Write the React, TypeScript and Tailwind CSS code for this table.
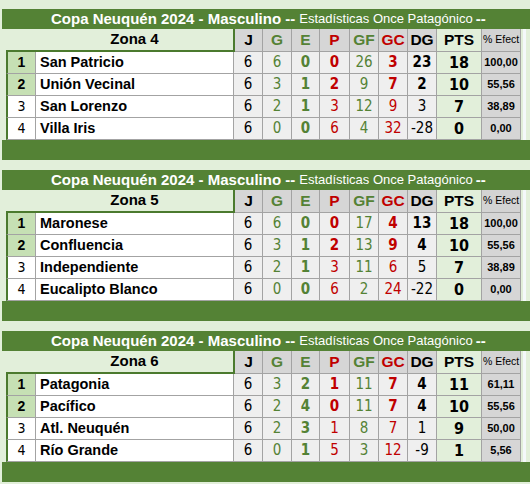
import React from 'react'

type Row = [string, number, number, number, number, number, number, number, number, string]

const zonas: { name: string; rows: Row[] }[] = [
  {
    name: 'Zona 4',
    rows: [
      ['San Patricio', 6, 6, 0, 0, 26, 3, 23, 18, '100,00'],
      ['Unión Vecinal', 6, 3, 1, 2, 9, 7, 2, 10, '55,56'],
      ['San Lorenzo', 6, 2, 1, 3, 12, 9, 3, 7, '38,89'],
      ['Villa Iris', 6, 0, 0, 6, 4, 32, -28, 0, '0,00'],
    ],
  },
  {
    name: 'Zona 5',
    rows: [
      ['Maronese', 6, 6, 0, 0, 17, 4, 13, 18, '100,00'],
      ['Confluencia', 6, 3, 1, 2, 13, 9, 4, 10, '55,56'],
      ['Independiente', 6, 2, 1, 3, 11, 6, 5, 7, '38,89'],
      ['Eucalipto Blanco', 6, 0, 0, 6, 2, 24, -22, 0, '0,00'],
    ],
  },
  {
    name: 'Zona 6',
    rows: [
      ['Patagonia', 6, 3, 2, 1, 11, 7, 4, 11, '61,11'],
      ['Pacífico', 6, 2, 4, 0, 11, 7, 4, 10, '55,56'],
      ['Atl. Neuquén', 6, 2, 3, 1, 8, 7, 1, 9, '50,00'],
      ['Río Grande', 6, 0, 1, 5, 3, 12, -9, 1, '5,56'],
    ],
  },
]

const narrow = "font-['Liberation_Sans_Narrow','Arial_Narrow','DejaVu_Sans_Condensed','Liberation_Sans',sans-serif] font-stretch-condensed"
const cell = 'flex items-center justify-center border-r border-b border-[#a3a3a3] h-full'

function Panel({ name, rows }: { name: string; rows: Row[] }) {
  return (
    <div>
      {/* title band */}
      <div className="ml-[2px] h-[20px] bg-[#548235] text-white flex items-center pl-[49px] whitespace-nowrap">
        <span className="text-[15px] font-bold">Copa Neuquén 2024 - Masculino --</span>
        <span className="text-[13px] ml-[4px]">Estadísticas Once Patagónico</span>
        <span className="text-[15px] font-bold ml-[3px]">--</span>
      </div>

      {/* header row */}
      <div className="flex h-[23px] text-[15.5px] font-bold">
        <div className="ml-[6px] w-[229px] h-full border-r-2 border-b-2 border-[#4b7a2e] bg-[#e2efda] flex items-center justify-center pl-[30px] text-[15px] text-black">
          {name}
        </div>
        <div className={`${cell} w-[28px] bg-[#d6d6d6] text-black`}>J</div>
        <div className={`${cell} w-[29px] bg-[#d6d6d6] text-[#548235]`}>G</div>
        <div className={`${cell} w-[28px] bg-[#d6d6d6] text-[#548235]`}>E</div>
        <div className={`${cell} w-[30px] bg-[#d6d6d6] text-[#c00000]`}>P</div>
        <div className={`${cell} w-[29px] bg-[#d6d6d6] text-[#548235]`}>GF</div>
        <div className={`${cell} w-[29px] bg-[#d6d6d6] text-[#c00000]`}>GC</div>
        <div className={`${cell} w-[29px] bg-[#d6d6d6] text-black`}>DG</div>
        <div className={`${cell} w-[45px] bg-[#e2efda] text-black`}>PTS</div>
        <div className="w-[39px] h-full border-r border-b border-[#a3a3a3] bg-[#d3d3d3] flex items-center pl-[1px] whitespace-nowrap text-[10.5px] font-normal text-black">
          % Efect
        </div>
        <div className="ml-[2px] w-[3px] h-full bg-[#f4f8fa]" />
      </div>

      {/* team rows */}
      {rows.map(([team, j, g, e, p, gf, gc, dg, pts, ef], i) => {
        const top = i < 2
        return (
          <div key={team} className="flex h-[22px] text-black">
            <div
              className={`ml-[6px] w-[30px] h-full border-l-2 border-[#4b7a2e] border-r border-b border-r-[#a3a3a3] border-b-[#a3a3a3] flex items-center justify-center text-[14px] ${
                top ? 'bg-[#c6e0b4] font-bold' : `bg-white ${narrow}`
              }`}
            >
              {i + 1}
            </div>
            <div className="w-[197px] h-full bg-white border-b border-[#a3a3a3] flex items-center pl-[4px] text-[14.5px] font-bold whitespace-nowrap">
              {team}
            </div>
            <div className={`${cell} border-l w-[30px] bg-[#efefef] ${narrow} text-[15px]`}>{j}</div>
            <div className={`${cell} w-[29px] bg-[#efefef] ${narrow} text-[15px] text-[#548235]`}>{g}</div>
            <div className={`${cell} w-[28px] bg-[#efefef] ${narrow} text-[15px] font-bold text-[#548235]`}>{e}</div>
            <div className={`${cell} w-[30px] bg-[#efefef] ${narrow} text-[15px] text-[#c00000] ${top ? 'font-bold' : ''}`}>{p}</div>
            <div className={`${cell} w-[29px] bg-[#efefef] ${narrow} text-[15px] text-[#548235]`}>{gf}</div>
            <div className={`${cell} w-[29px] bg-[#efefef] ${narrow} text-[15px] text-[#c00000] ${top ? 'font-bold' : ''}`}>{gc}</div>
            <div className={`${cell} w-[29px] bg-[#efefef] ${narrow} text-[15px] ${top ? 'font-bold' : ''}`}>{dg}</div>
            <div className={`${cell} w-[45px] bg-[#e2efda] ${narrow} text-[16px] font-bold`}>{pts}</div>
            <div className={`${cell} w-[39px] bg-[#d6d6d6] text-[11px] font-bold`}>{ef}</div>
            <div className="ml-[2px] w-[3px] h-full bg-[#f4f8fa]" />
          </div>
        )
      })}

      {/* footer band */}
      <div className="ml-[2px] h-[20px] bg-[#548235]" />
    </div>
  )
}

export default function App() {
  return (
    <div className="w-[530px] h-[484px] overflow-hidden bg-[#e2efda] pt-[9px] font-['Liberation_Sans',Arial,sans-serif]">
      <div className="flex flex-col gap-[10px]">
        {zonas.map((z) => (
          <Panel key={z.name} name={z.name} rows={z.rows} />
        ))}
      </div>
    </div>
  )
}
